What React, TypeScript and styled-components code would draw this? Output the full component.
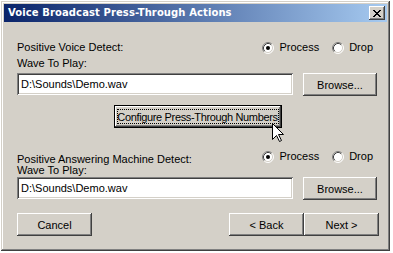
import React from 'react';
import styled, { createGlobalStyle } from 'styled-components';

const GlobalStyle = createGlobalStyle`
  html, body {
    margin: 0;
    padding: 0;
    background: #ffffff;
  }
  body {
    font-family: "Liberation Sans", Arial, sans-serif;
    font-size: 11px;
    color: #000;
  }
`;

const raised = `
  box-shadow: inset -1px -1px #404040, inset 1px 1px #ffffff,
    inset -2px -2px #808080, inset 2px 2px #d4d0c8;
`;

const Window = styled.div`
  position: relative;
  box-sizing: border-box;
  margin: 1px 0 0 1px;
  width: 389px;
  height: 250px;
  padding: 3px;
  background: #d4d0c8;
  display: flex;
  flex-direction: column;
  box-shadow: inset -1px -1px #404040, inset 1px 1px #d4d0c8,
    inset -2px -2px #808080, inset 2px 2px #ffffff;
`;

const TitleBar = styled.div`
  height: 18px;
  flex: 0 0 18px;
  background: linear-gradient(to right, #0a246a, #a6caf0);
  display: flex;
  align-items: center;
  justify-content: space-between;
  padding: 0 2px 0 4px;
`;

const TitleText = styled.span`
  color: #ffffff;
  font-family: "DejaVu Sans", Verdana, sans-serif;
  font-weight: bold;
  font-size: 10px;
  line-height: 18px;
  letter-spacing: 0.1px;
  white-space: nowrap;
`;

const CloseButton = styled.div`
  box-sizing: border-box;
  width: 16px;
  height: 14px;
  background: #d4d0c8;
  display: flex;
  align-items: center;
  justify-content: center;
  ${raised}
`;

const Body = styled.div`
  flex: 1;
  display: flex;
  flex-direction: column;
  padding: 19px 9px 0 13px;
`;

const HeaderRow = styled.div<{ $top?: number }>`
  display: flex;
  justify-content: space-between;
  align-items: flex-start;
  margin-top: ${p => p.$top ?? 0}px;
`;

const Label = styled.div<{ $drop?: number; $top?: number }>`
  line-height: 13px;
  height: 13px;
  white-space: nowrap;
  padding-top: ${p => p.$drop ?? 0}px;
  margin-top: ${p => p.$top ?? 0}px;
`;

const RadioGroup = styled.div`
  display: flex;
  gap: 13px;
  margin-right: 5px;
`;

const RadioOption = styled.label`
  display: flex;
  align-items: center;
  gap: 5px;
  line-height: 13px;
  height: 13px;
`;

const FileRow = styled.div<{ $top?: number }>`
  display: flex;
  align-items: flex-start;
  gap: 10px;
  margin-top: ${p => p.$top ?? 0}px;
`;

const TextBox = styled.input`
  box-sizing: border-box;
  width: 276px;
  height: 22px;
  margin: 0;
  padding: 0 0 0 4px;
  border: none;
  outline: none;
  background: #ffffff;
  font-family: "Liberation Sans", Arial, sans-serif;
  font-size: 11px;
  color: #000;
  box-shadow: inset 1px 1px #808080, inset -1px -1px #ffffff,
    inset 2px 2px #404040, inset -2px -2px #d4d0c8;
`;

const Button = styled.button<{ $w: number; $h?: number }>`
  box-sizing: border-box;
  width: ${p => p.$w}px;
  height: ${p => p.$h ?? 23}px;
  margin: 0;
  padding: 0;
  border: none;
  background: #d4d0c8;
  font-family: "Liberation Sans", Arial, sans-serif;
  font-size: 11px;
  color: #000;
  white-space: nowrap;
  ${raised}
`;

const DefaultButton = styled(Button)`
  padding: 4px 3px;
  letter-spacing: -0.35px;
  box-shadow: inset 0 0 0 1px #000000, inset -2px -2px #404040,
    inset 2px 2px #ffffff, inset -3px -3px #808080;
`;

const FocusRing = styled.span`
  display: flex;
  align-items: center;
  justify-content: center;
  height: 100%;
  box-sizing: border-box;
  outline: 1px dotted #000;
  outline-offset: -1px;
`;

const CenterRow = styled.div`
  display: flex;
  justify-content: center;
  margin-top: 9px;
`;

const Footer = styled.div`
  display: flex;
  justify-content: space-between;
  margin-top: 13px;
  margin-right: -1px;
`;

const ButtonPair = styled.div`
  display: flex;
`;

const Cursor = styled.svg`
  position: absolute;
  left: 271px;
  top: 122px;
`;

const Radio = ({ checked }: { checked?: boolean }) => (
  <svg width="12" height="12" viewBox="0 0 12 12">
    <circle cx="6" cy="6" r="5" fill="#ffffff" />
    <path d="M 2.11 9.89 A 5.5 5.5 0 0 1 9.89 2.11" stroke="#808080" fill="none" />
    <path d="M 9.89 2.11 A 5.5 5.5 0 0 1 2.11 9.89" stroke="#ffffff" fill="none" />
    <path d="M 2.82 9.18 A 4.5 4.5 0 0 1 9.18 2.82" stroke="#404040" fill="none" />
    <path d="M 9.18 2.82 A 4.5 4.5 0 0 1 2.82 9.18" stroke="#d4d0c8" fill="none" />
    {checked && <circle cx="6" cy="6" r="2" fill="#000000" />}
  </svg>
);

const CloseGlyph = () => (
  <svg width="8" height="7" viewBox="0 0 8 7" shapeRendering="crispEdges">
    {[0, 1, 2, 3, 4, 5, 6].map(i => {
      const a = i <= 3 ? i : 6 - i;
      return (
        <g key={i}>
          <rect x={a} y={i} width="2" height="1" fill="#000" />
          <rect x={6 - a} y={i} width="2" height="1" fill="#000" />
        </g>
      );
    })}
  </svg>
);

const ActionRadios = () => (
  <RadioGroup>
    <RadioOption>
      <Radio checked />
      Process
    </RadioOption>
    <RadioOption>
      <Radio />
      Drop
    </RadioOption>
  </RadioGroup>
);

const App: React.FC = () => {
  return (
    <>
      <GlobalStyle />
      <Window>
        <TitleBar>
          <TitleText>Voice Broadcast Press-Through Actions</TitleText>
          <CloseButton>
            <CloseGlyph />
          </CloseButton>
        </TitleBar>
        <Body>
          <HeaderRow>
            <Label>Positive Voice Detect:</Label>
            <ActionRadios />
          </HeaderRow>
          <Label $top={3}>Wave To Play:</Label>
          <FileRow $top={3}>
            <TextBox readOnly value="D:\Sounds\Demo.wav" />
            <Button $w={74}>Browse...</Button>
          </FileRow>

          <CenterRow>
            <DefaultButton $w={168}>
              <FocusRing>Configure Press-Through Numbers</FocusRing>
            </DefaultButton>
          </CenterRow>

          <HeaderRow $top={22}>
            <Label $drop={3}>Positive Answering Machine Detect:</Label>
            <ActionRadios />
          </HeaderRow>
          <Label $top={-2}>Wave To Play:</Label>
          <FileRow>
            <TextBox readOnly value="D:\Sounds\Demo.wav" />
            <Button $w={74}>Browse...</Button>
          </FileRow>

          <Footer>
            <Button $w={75}>Cancel</Button>
            <ButtonPair>
              <Button $w={75}>&lt; Back</Button>
              <Button $w={75}>Next &gt;</Button>
            </ButtonPair>
          </Footer>
        </Body>
        <Cursor width="13" height="20" viewBox="0 0 13 20">
          <path
            d="M0.5 0.5 L0.5 16.5 L4.5 12.5 L7.5 18.5 L9.5 17.5 L6.5 11.5 L11.5 11.5 Z"
            fill="#ffffff"
            stroke="#000000"
            strokeWidth="1"
            strokeLinejoin="miter"
          />
        </Cursor>
      </Window>
    </>
  );
};

export default App;
